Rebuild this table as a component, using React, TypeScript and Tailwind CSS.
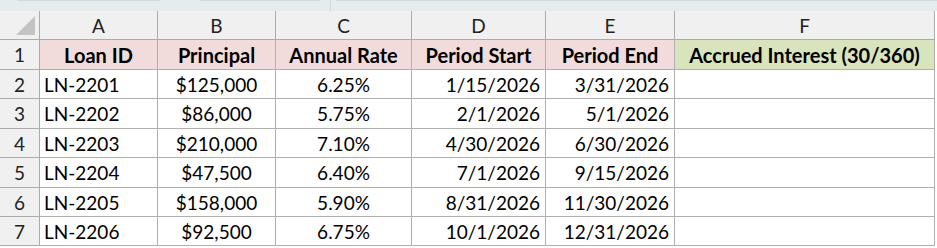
import React from "react";

const cols = ["A", "B", "C", "D", "E", "F"];
const headers = ["Loan ID", "Principal", "Annual Rate", "Period Start", "Period End", "Accrued Interest (30/360)"];
const rows = [
  ["LN-2201", "$125,000", "6.25%", "1/15/2026", "3/31/2026"],
  ["LN-2202", "$86,000", "5.75%", "2/1/2026", "5/1/2026"],
  ["LN-2203", "$210,000", "7.10%", "4/30/2026", "6/30/2026"],
  ["LN-2204", "$47,500", "6.40%", "7/1/2026", "9/15/2026"],
  ["LN-2205", "$158,000", "5.90%", "8/31/2026", "11/30/2026"],
  ["LN-2206", "$92,500", "6.75%", "10/1/2026", "12/31/2026"],
];
const align = ["justify-start pl-[4px]", "justify-center", "justify-center", "justify-end pr-[5px]", "justify-end pr-[5px]", "justify-center"];

export default function App() {
  return (
    <div className="w-[937px] h-[248px] bg-white overflow-hidden text-black" style={{ fontFamily: "Lato, 'Open Sans', sans-serif" }}>
      <div className="h-[11px] bg-[#e6ebed] flex items-start">
        <div className="ml-[17px] w-[143px] h-px bg-[#d2d7da]" />
        <div className="ml-[40px] w-[120px] h-px bg-[#d2d7da]" />
        <div className="ml-[10px] w-px h-[11px] bg-[#d2d7da]" />
        <div className="ml-[5px] flex-1 h-px bg-[#d2d7da]" />
      </div>
      <div className="grid grid-cols-[40px_118px_118px_136px_134px_129px_260px] grid-rows-[29px_30px_29px_30px_29px_30px_29px_29px] text-[19px] leading-none">
        <div className="bg-[#f0f0f0] border-r border-b border-[#ababab] relative">
          <svg className="absolute left-[16px] top-[5px]" width="19" height="19" viewBox="0 0 19 19">
            <polygon points="19,0 19,19 0,19" fill="#c3c3c3" />
          </svg>
        </div>
        {cols.map((c) => (
          <div key={c} className="bg-[#f0f0f0] border-r border-b border-[#ababab] flex items-center justify-center pt-[1px] text-[#222]">
            {c}
          </div>
        ))}
        <div className="bg-[#f0f0f0] border-r border-b border-[#ababab] flex items-center justify-center text-[#222]">1</div>
        {headers.map((h, i) => (
          <div
            key={h}
            className={`${i === 5 ? "bg-[#d8e4bc]" : "bg-[#f2dcdb]"} border-r border-b border-[#b0b0b0] flex items-center justify-center font-bold text-[20px]`}
          >
            {h}
          </div>
        ))}
        {rows.map((r, ri) => (
          <React.Fragment key={ri}>
            <div className="bg-[#f0f0f0] border-r border-b border-[#ababab] flex items-center justify-center text-[#222]">{ri + 2}</div>
            {[...r, ""].map((v, ci) => (
              <div key={ci} className={`border-r border-b border-[#b0b0b0] flex items-center ${align[ci]}`}>
                {v}
              </div>
            ))}
          </React.Fragment>
        ))}
      </div>
    </div>
  );
}
